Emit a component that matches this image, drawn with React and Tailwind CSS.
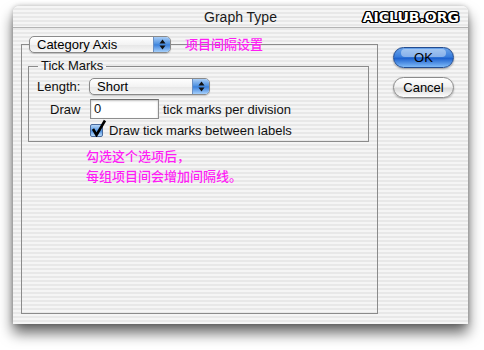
import React from "react";

const stripes =
  "bg-[image:repeating-linear-gradient(180deg,#f5f5f5_0px,#f5f5f5_2px,#e8e8e8_2px,#e8e8e8_4px)]";

function Arrows() {
  return (
    <svg width="7" height="11" viewBox="0 0 7 11">
      <path d="M3.5 0.5 L6.5 4.5 L0.5 4.5 Z M3.5 10.5 L6.5 6.5 L0.5 6.5 Z" fill="#111" />
    </svg>
  );
}

function Popup({ className, label }) {
  return (
    <div
      className={`flex h-[17px] rounded-[5px] border border-[#8a8a8a] bg-[linear-gradient(#ffffff,#f3f3f3_50%,#e6e6e6_52%,#f7f7f7)] shadow-[0_1px_1px_rgba(0,0,0,0.18)] ${className}`}
    >
      <div className="flex-1 pl-[7px] text-[13px] leading-[15px] text-black">{label}</div>
      <div className="w-[17px] flex items-center justify-center rounded-r-[4px] border-l border-[#6b8fc2] bg-[linear-gradient(#a9cdf6,#4b8fe0_48%,#3a80dc_52%,#a6d0fb)]">
        <Arrows />
      </div>
    </div>
  );
}

function Checkbox() {
  return (
    <div className="relative w-[13px] h-[13px] rounded-[2px] border border-[#4a6a9c] bg-[linear-gradient(#b6d6f8,#5b9be4_50%,#4a8de0_52%,#b8dcfc)]">
      <svg className="absolute left-[0px] top-[-6px]" width="16" height="18" viewBox="0 0 16 18">
        <path d="M2 10 L5.5 16 L14 1.5" fill="none" stroke="#000" strokeWidth="2.6" strokeLinejoin="miter" />
      </svg>
    </div>
  );
}

export default function App() {
  return (
    <div
      className="w-[484px] h-[350px] bg-white pl-[13px] pt-[6px] text-[#111]"
      style={{ fontFamily: '"Liberation Sans", "Noto Sans CJK SC", sans-serif' }}
    >
      <div
        className={`w-[455px] h-[318px] rounded-t-[6px] ${stripes} shadow-[0_9px_14px_rgba(0,0,0,0.6),0_0_5px_rgba(0,0,0,0.25)]`}
      >
        {/* title bar */}
        <div className="relative h-[22px] flex items-center justify-center border-b border-[#b4b4b4] rounded-t-[6px]">
          <span className="text-[14px] leading-none text-[#1a1a1a]">Graph Type</span>
          <span
            className="absolute right-[9px] top-[4px] text-[14px] font-bold leading-none text-white [text-shadow:1px_0_0_#000,-1px_0_0_#000,0_1px_0_#000,0_-1px_0_#000,1px_1px_0_#000,-1px_-1px_0_#000,1px_-1px_0_#000,-1px_1px_0_#000,1.5px_0_0_#000,-1.5px_0_0_#000]"
            style={{ fontFamily: '"DejaVu Sans", sans-serif' }}
          >
            AICLUB.ORG
          </span>
        </div>

        <div className="flex pl-[8px] pt-[8px]">
          {/* left group */}
          <div className="w-[357px]">
            <div className="relative z-10 flex items-center h-[17px] ml-[8px]">
              <Popup className="w-[142px]" label="Category Axis" />
              <span className="ml-[14px] text-[13px] font-medium leading-none text-[#ff1cf5]">项目间隔设置</span>
            </div>
            <div className="-mt-[9px] h-[270px] border border-[#8b8b8b]">
              <fieldset className="ml-[6px] mt-[13px] w-[341px] border border-[#8b8b8b] pb-[4px]">
                <legend className="ml-[9px] px-[3px] text-[13px] leading-[16px]">Tick Marks</legend>
                <div className="flex items-center h-[17px] mt-[4px] pl-[8px]">
                  <span className="w-[52px] text-[13px] leading-none">Length:</span>
                  <Popup className="w-[121px]" label="Short" />
                </div>
                <div className="flex items-center h-[20px] mt-[4px] pl-[21px]">
                  <span className="w-[40px] text-[13px] leading-none">Draw</span>
                  <div className="w-[69px] h-[20px] border border-[#8e8e8e] border-t-[#6e6e6e] bg-white shadow-[inset_0_1px_2px_rgba(0,0,0,0.25)] pl-[3px] text-[13px] leading-[18px]">
                    0
                  </div>
                  <span className="ml-[4px] text-[13px] leading-none">tick marks per division</span>
                </div>
                <div className="flex items-center h-[13px] mt-[5px] pl-[61px]">
                  <Checkbox />
                  <span className="ml-[6px] text-[13px] leading-none">Draw tick marks between labels</span>
                </div>
              </fieldset>
              <div className="mt-[5px] ml-[64px] text-[13px] font-medium leading-[20px] text-[#ff1cf5]">
                <div>勾选这个选项后，</div>
                <div>每组项目间会增加间隔线。</div>
              </div>
            </div>
          </div>

          {/* buttons */}
          <div className="ml-[15px] pt-[11px] flex flex-col gap-[9px]">
            <button className="relative w-[61px] h-[21px] rounded-full border border-[#234c8f] bg-[linear-gradient(#6aa3ea,#3a7edc_45%,#1f63cf_55%,#7fbaf7)] shadow-[0_1px_2px_rgba(0,0,0,0.35)] text-[13px] leading-none text-black">
              <span className="absolute inset-x-[7px] top-[1px] h-[8px] rounded-full bg-white/40" />
              <span className="relative">OK</span>
            </button>
            <button className="relative w-[61px] h-[21px] rounded-full border border-[#8a8a8a] bg-[linear-gradient(#ffffff,#f1f1f1_45%,#d9d9d9_55%,#ffffff)] shadow-[0_1px_2px_rgba(0,0,0,0.3)] text-[13px] leading-none text-black">
              Cancel
            </button>
          </div>
        </div>
      </div>
    </div>
  );
}
